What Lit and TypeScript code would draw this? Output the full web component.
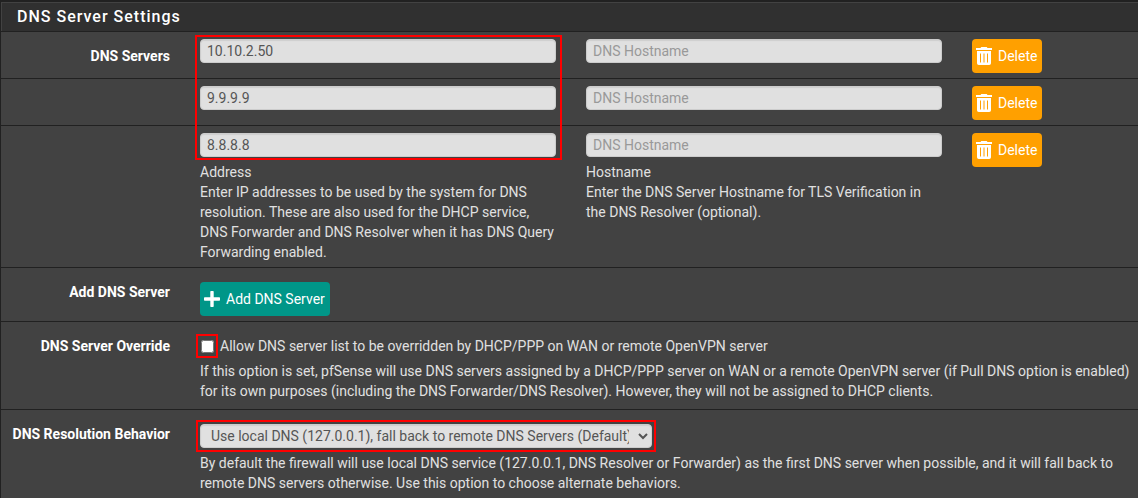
import { LitElement, html, css, svg, nothing } from "lit";
import { customElement, property } from "lit/decorators.js";

const trashIcon = html`<svg class="icon" viewBox="0 0 16 18" aria-hidden="true">
  ${svg`<path fill="currentColor" fill-rule="evenodd" d="M5.300 0h5.400l.8 1H16v2H0V1h4.500zM1 4h14v12.200a1.800 1.800 0 0 1-1.800 1.800H2.800A1.800 1.800 0 0 1 1 16.200zM4 6.500v9h1v-9zM7.500 6.500v9h1v-9zM11 6.500v9h1v-9z"/>`}
</svg>`;

const plusIcon = html`<svg class="icon" viewBox="0 0 16 18" aria-hidden="true">
  ${svg`<path fill="currentColor" d="M7 1h2a.7.7 0 0 1 .7.7v5.600h5.600a.7.7 0 0 1 .7.7v2a.7.7 0 0 1-.7.7H9.700v5.600a.7.7 0 0 1-.7.7H7a.7.7 0 0 1-.7-.7v-5.600H.7A.7.7 0 0 1 0 10V8a.7.7 0 0 1 .7-.7h5.600V1.700A.7.7 0 0 1 7 1z"/>`}
</svg>`;

const controls = css`
  * {
    box-sizing: border-box;
  }
  input,
  select,
  button {
    font: inherit;
    margin: 0;
  }
  .field {
    display: block;
    width: 100%;
    height: 24px;
    padding: 0 6px;
    border: 1px solid #cccccc;
    border-radius: 4px;
    background: #e0e0e0;
    color: #555555;
    box-shadow: inset 0 1px 1px rgba(0, 0, 0, 0.08);
  }
  .field::placeholder {
    color: #999999;
    opacity: 1;
  }
  .help {
    display: block;
    margin: 5px 0 0;
  }
  .button {
    display: inline-flex;
    align-items: center;
    gap: 6px;
    height: 34px;
    padding: 0 5px 0 4px;
    border: 0;
    border-radius: 4px;
    color: #ffffff;
    white-space: nowrap;
    vertical-align: top;
  }
  .icon {
    width: 16px;
    height: 18px;
    flex: none;
  }
  .mark {
    position: relative;
  }
  .mark::after {
    content: "";
    position: absolute;
    inset: -4px;
    border: 2px solid #ff0000;
    pointer-events: none;
  }
`;

@customElement("server-row")
class ServerRow extends LitElement {
  @property() address = "";
  @property({ type: Number }) index = 0;
  @property({ type: Boolean }) last = false;

  static styles = [
    controls,
    css`
      :host {
        display: grid;
        grid-template-columns: 184px minmax(0, 386fr) minmax(0, 386fr) minmax(0, 181fr);
        padding: 7px 0 5px;
        border-bottom: 1px solid #212121;
      }
      .title {
        padding: 7px 15px 0 0;
        text-align: right;
        font-weight: 700;
        color: #ffffff;
      }
      .cell {
        padding: 0 15px;
      }
      .remove {
        background: #ffa000;
      }
      .all::after {
        inset: -4px -6px -97px -5px;
      }
    `,
  ];

  render() {
    const first = this.index === 0;
    return html`
      <div class="title">${first ? "DNS Servers" : nothing}</div>
      <div class="cell">
        <div class=${first ? "mark all" : "plain"}>
          <input class="field" type="text" aria-label="Address" .value=${this.address} />
        </div>
        ${this.last
          ? html`<span class="help">Address<br />Enter IP addresses to be used by the system for DNS resolution. These are also used for the DHCP service, DNS Forwarder and DNS Resolver when it has DNS Query Forwarding enabled.</span>`
          : nothing}
      </div>
      <div class="cell">
        <input class="field" type="text" aria-label="Hostname" placeholder="DNS Hostname" />
        ${this.last
          ? html`<span class="help">Hostname<br />Enter the DNS Server Hostname for TLS Verification in the DNS Resolver (optional).</span>`
          : nothing}
      </div>
      <div class="cell">
        <button class="button remove" type="button">${trashIcon}Delete</button>
      </div>
    `;
  }
}

@customElement("app-root")
class AppRoot extends LitElement {
  @property({ attribute: false }) servers = ["10.10.2.50", "9.9.9.9", "8.8.8.8"];

  static styles = [
    controls,
    css`
      :host {
        display: block;
        min-height: 100vh;
        padding: 2px 0 0 1px;
        box-sizing: border-box;
        background: #212121;
        color: #e0e0e0;
        font: 14px/20px Roboto, sans-serif;
      }
      .panel {
        min-height: calc(100vh - 2px);
        background: #424242;
      }
      .heading {
        margin: 0;
        padding: 4px 15px;
        border: 1px solid #424242;
        border-width: 1px 0 0 1px;
        box-shadow: 0 1px 0 #212121;
        margin-bottom: 1px;
        background: #303030;
        color: #ffffff;
        font-size: 16px;
        font-weight: 500;
        letter-spacing: 1px;
      }
      .row {
        display: grid;
        grid-template-columns: 184px minmax(0, 1fr);
        padding: 14px 0 5px;
        border-bottom: 1px solid #212121;
      }
      .row:last-child {
        border-bottom: 0;
      }
      .roomy {
        padding-bottom: 8px;
      }
      .title {
        padding-right: 15px;
        text-align: right;
        font-weight: 700;
        color: #ffffff;
      }
      .cell {
        padding: 0 5px 0 15px;
      }
      .add {
        background: #009688;
      }
      .check {
        display: flex;
        align-items: center;
        gap: 6px;
      }
      .box {
        display: block;
        width: 13px;
        height: 13px;
      }
      .tick {
        margin-left: 1px;
      }
      .tick::after {
        inset: -6px -4px -5px -5px;
      }
      .behavior {
        width: 452px;
        max-width: 100%;
      }
    `,
  ];

  render() {
    return html`
      <section class="panel">
        <h2 class="heading">DNS Server Settings</h2>
        ${this.servers.map(
          (address, i) => html`<server-row
            .address=${address}
            .index=${i}
            .last=${i === this.servers.length - 1}
          ></server-row>`
        )}
        <div class="row">
          <div class="title">Add DNS Server</div>
          <div class="cell">
            <button class="button add" type="button">${plusIcon}Add DNS Server</button>
          </div>
        </div>
        <div class="row roomy">
          <div class="title">DNS Server Override</div>
          <div class="cell">
            <label class="check">
              <span class="mark tick"><input class="box" type="checkbox" /></span>
              Allow DNS server list to be overridden by DHCP/PPP on WAN or remote OpenVPN server
            </label>
            <span class="help">If this option is set, pfSense will use DNS servers assigned by a DHCP/PPP server on WAN or a remote OpenVPN server (if Pull DNS option is enabled) for its own purposes (including the DNS Forwarder/DNS Resolver). However, they will not be assigned to DHCP clients.</span>
          </div>
        </div>
        <div class="row">
          <label class="title" for="behavior">DNS Resolution Behavior</label>
          <div class="cell">
            <div class="mark behavior">
              <select class="field" id="behavior">
                <option>Use local DNS (127.0.0.1), fall back to remote DNS Servers (Default)</option>
                <option>Use local DNS (127.0.0.1), ignore remote DNS Servers</option>
                <option>Use remote DNS Servers, ignore local DNS</option>
              </select>
            </div>
            <span class="help">By default the firewall will use local DNS service (127.0.0.1, DNS Resolver or Forwarder) as the first DNS server when possible, and it will fall back to remote DNS servers otherwise. Use this option to choose alternate behaviors.</span>
          </div>
        </div>
      </section>
    `;
  }
}
